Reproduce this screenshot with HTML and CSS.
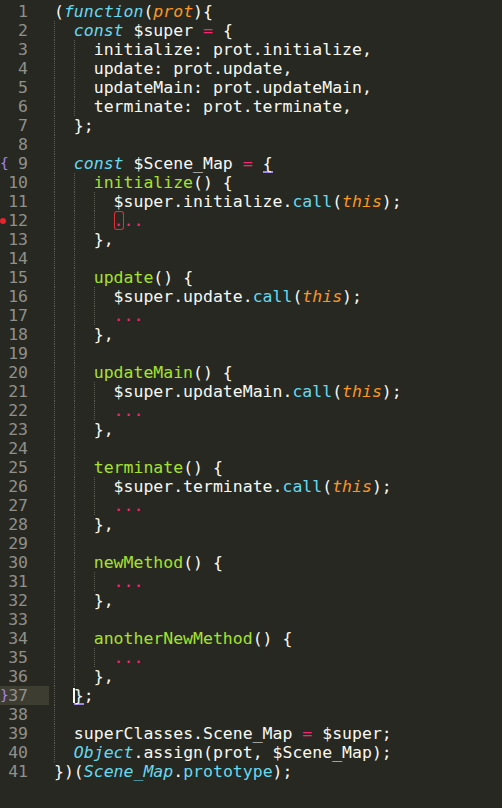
FILE: index.html
```html
<!DOCTYPE html>
<html>
<head>
<meta charset="utf-8">
<link rel="stylesheet" href="styles.css">
</head>
<body>
<div class="editor">
<div class="line"><div class="gut"><span class="num">1</span></div><div class="code">(<i class="kw">function</i>(<i class="pa">prot</i>){</div></div>
<div class="line"><div class="gut"><span class="num">2</span></div><div class="code"><span class="ind"></span><i class="kw">const</i> $super <span class="op">=</span> {</div></div>
<div class="line"><div class="gut"><span class="num">3</span></div><div class="code"><span class="ind"></span><span class="ind"></span>initialize: prot.initialize,</div></div>
<div class="line"><div class="gut"><span class="num">4</span></div><div class="code"><span class="ind"></span><span class="ind"></span>update: prot.update,</div></div>
<div class="line"><div class="gut"><span class="num">5</span></div><div class="code"><span class="ind"></span><span class="ind"></span>updateMain: prot.updateMain,</div></div>
<div class="line"><div class="gut"><span class="num">6</span></div><div class="code"><span class="ind"></span><span class="ind"></span>terminate: prot.terminate,</div></div>
<div class="line"><div class="gut"><span class="num">7</span></div><div class="code"><span class="ind"></span>};</div></div>
<div class="line"><div class="gut"><span class="num">8</span></div><div class="code"><span class="ind"></span></div></div>
<div class="line"><div class="gut"><span class="fold">{</span><span class="num">9</span></div><div class="code"><span class="ind"></span><i class="kw">const</i> $Scene_Map <span class="op">=</span> <span class="match">{</span></div></div>
<div class="line"><div class="gut"><span class="num">10</span></div><div class="code"><span class="ind"></span><span class="ind"></span><span class="fn">initialize</span>() {</div></div>
<div class="line"><div class="gut"><span class="num">11</span></div><div class="code"><span class="ind"></span><span class="ind"></span><span class="ind"></span>$super.initialize.<span class="sp">call</span>(<i class="pa">this</i>);</div></div>
<div class="line"><div class="gut"><span class="dot"></span><span class="num">12</span></div><div class="code"><span class="ind"></span><span class="ind"></span><span class="ind"></span><span class="op"><span class="err">.</span>..</span></div></div>
<div class="line"><div class="gut"><span class="num">13</span></div><div class="code"><span class="ind"></span><span class="ind"></span>},</div></div>
<div class="line"><div class="gut"><span class="num">14</span></div><div class="code"><span class="ind"></span><span class="ind"></span></div></div>
<div class="line"><div class="gut"><span class="num">15</span></div><div class="code"><span class="ind"></span><span class="ind"></span><span class="fn">update</span>() {</div></div>
<div class="line"><div class="gut"><span class="num">16</span></div><div class="code"><span class="ind"></span><span class="ind"></span><span class="ind"></span>$super.update.<span class="sp">call</span>(<i class="pa">this</i>);</div></div>
<div class="line"><div class="gut"><span class="num">17</span></div><div class="code"><span class="ind"></span><span class="ind"></span><span class="ind"></span><span class="op">...</span></div></div>
<div class="line"><div class="gut"><span class="num">18</span></div><div class="code"><span class="ind"></span><span class="ind"></span>},</div></div>
<div class="line"><div class="gut"><span class="num">19</span></div><div class="code"><span class="ind"></span><span class="ind"></span></div></div>
<div class="line"><div class="gut"><span class="num">20</span></div><div class="code"><span class="ind"></span><span class="ind"></span><span class="fn">updateMain</span>() {</div></div>
<div class="line"><div class="gut"><span class="num">21</span></div><div class="code"><span class="ind"></span><span class="ind"></span><span class="ind"></span>$super.updateMain.<span class="sp">call</span>(<i class="pa">this</i>);</div></div>
<div class="line"><div class="gut"><span class="num">22</span></div><div class="code"><span class="ind"></span><span class="ind"></span><span class="ind"></span><span class="op">...</span></div></div>
<div class="line"><div class="gut"><span class="num">23</span></div><div class="code"><span class="ind"></span><span class="ind"></span>},</div></div>
<div class="line"><div class="gut"><span class="num">24</span></div><div class="code"><span class="ind"></span><span class="ind"></span></div></div>
<div class="line"><div class="gut"><span class="num">25</span></div><div class="code"><span class="ind"></span><span class="ind"></span><span class="fn">terminate</span>() {</div></div>
<div class="line"><div class="gut"><span class="num">26</span></div><div class="code"><span class="ind"></span><span class="ind"></span><span class="ind"></span>$super.terminate.<span class="sp">call</span>(<i class="pa">this</i>);</div></div>
<div class="line"><div class="gut"><span class="num">27</span></div><div class="code"><span class="ind"></span><span class="ind"></span><span class="ind"></span><span class="op">...</span></div></div>
<div class="line"><div class="gut"><span class="num">28</span></div><div class="code"><span class="ind"></span><span class="ind"></span>},</div></div>
<div class="line"><div class="gut"><span class="num">29</span></div><div class="code"><span class="ind"></span><span class="ind"></span></div></div>
<div class="line"><div class="gut"><span class="num">30</span></div><div class="code"><span class="ind"></span><span class="ind"></span><span class="fn">newMethod</span>() {</div></div>
<div class="line"><div class="gut"><span class="num">31</span></div><div class="code"><span class="ind"></span><span class="ind"></span><span class="ind"></span><span class="op">...</span></div></div>
<div class="line"><div class="gut"><span class="num">32</span></div><div class="code"><span class="ind"></span><span class="ind"></span>},</div></div>
<div class="line"><div class="gut"><span class="num">33</span></div><div class="code"><span class="ind"></span><span class="ind"></span></div></div>
<div class="line"><div class="gut"><span class="num">34</span></div><div class="code"><span class="ind"></span><span class="ind"></span><span class="fn">anotherNewMethod</span>() {</div></div>
<div class="line"><div class="gut"><span class="num">35</span></div><div class="code"><span class="ind"></span><span class="ind"></span><span class="ind"></span><span class="op">...</span></div></div>
<div class="line"><div class="gut"><span class="num">36</span></div><div class="code"><span class="ind"></span><span class="ind"></span>},</div></div>
<div class="line"><div class="gut cur"><span class="fold">}</span><span class="num">37</span></div><div class="code"><span class="ind"></span><span class="match caret">}</span>;</div></div>
<div class="line"><div class="gut"><span class="num">38</span></div><div class="code"><span class="ind"></span></div></div>
<div class="line"><div class="gut"><span class="num">39</span></div><div class="code"><span class="ind"></span>superClasses.Scene_Map <span class="op">=</span> $super;</div></div>
<div class="line"><div class="gut"><span class="num">40</span></div><div class="code"><span class="ind"></span><i class="kw">Object</i>.assign(prot, $Scene_Map);</div></div>
<div class="line"><div class="gut"><span class="num">41</span></div><div class="code">})(<i class="kw">Scene_Map</i>.<span class="sp">prototype</span>);</div></div>
</div>
</body>
</html>
```
FILE: styles.css
```css
html, body {
  margin: 0;
  padding: 0;
  background: #272822;
  height: 100%;
}
.editor {
  padding-top: 2px;
  font-family: "DejaVu Sans Mono", monospace;
  font-size: 16.5px;
  color: #f8f8f2;
  display: flex;
  flex-direction: column;
}
.line {
  display: flex;
  height: 19px;
  line-height: 19px;
}
.gut {
  position: relative;
  width: 49px;
  flex: none;
  display: flex;
  justify-content: flex-end;
  padding-right: 21px;
  box-sizing: border-box;
  color: #90908a;
}
.gut.cur {
  background: #3e3d32;
}
.fold {
  position: absolute;
  left: 0;
  top: 0;
  font-size: 14.5px;
  color: #a582f0;
}
.dot {
  position: absolute;
  left: 0;
  top: 7px;
  width: 6px;
  height: 6px;
  border-radius: 50%;
  background: #e8232b;
}
.code {
  padding-left: 5px;
  white-space: pre;
  height: 19px;
}
.ind {
  display: inline-block;
  width: 2ch;
  height: 19px;
  vertical-align: top;
  box-sizing: border-box;
  border-left: 1px dotted #5c5d55;
}
i { font-style: italic; }
.kw { color: #66d9ef; }
.pa { color: #fd971f; }
.op { color: #f92672; }
.fn { color: #a6e22e; }
.sp { color: #66d9ef; }
.err {
  display: inline-block;
  height: 19px;
  vertical-align: top;
  box-sizing: border-box;
  border-radius: 3px;
  box-shadow: inset 0 0 0 1px #e0303a;
}
.match {
  display: inline-block;
  height: 19px;
  vertical-align: top;
  box-sizing: border-box;
  border-bottom: 2px solid #9d8ae0;
}
.caret {
  position: relative;
}
.caret::before {
  content: "";
  position: absolute;
  left: -1px;
  top: 2px;
  bottom: 0;
  width: 2px;
  background: #f8f8f0;
}
```
